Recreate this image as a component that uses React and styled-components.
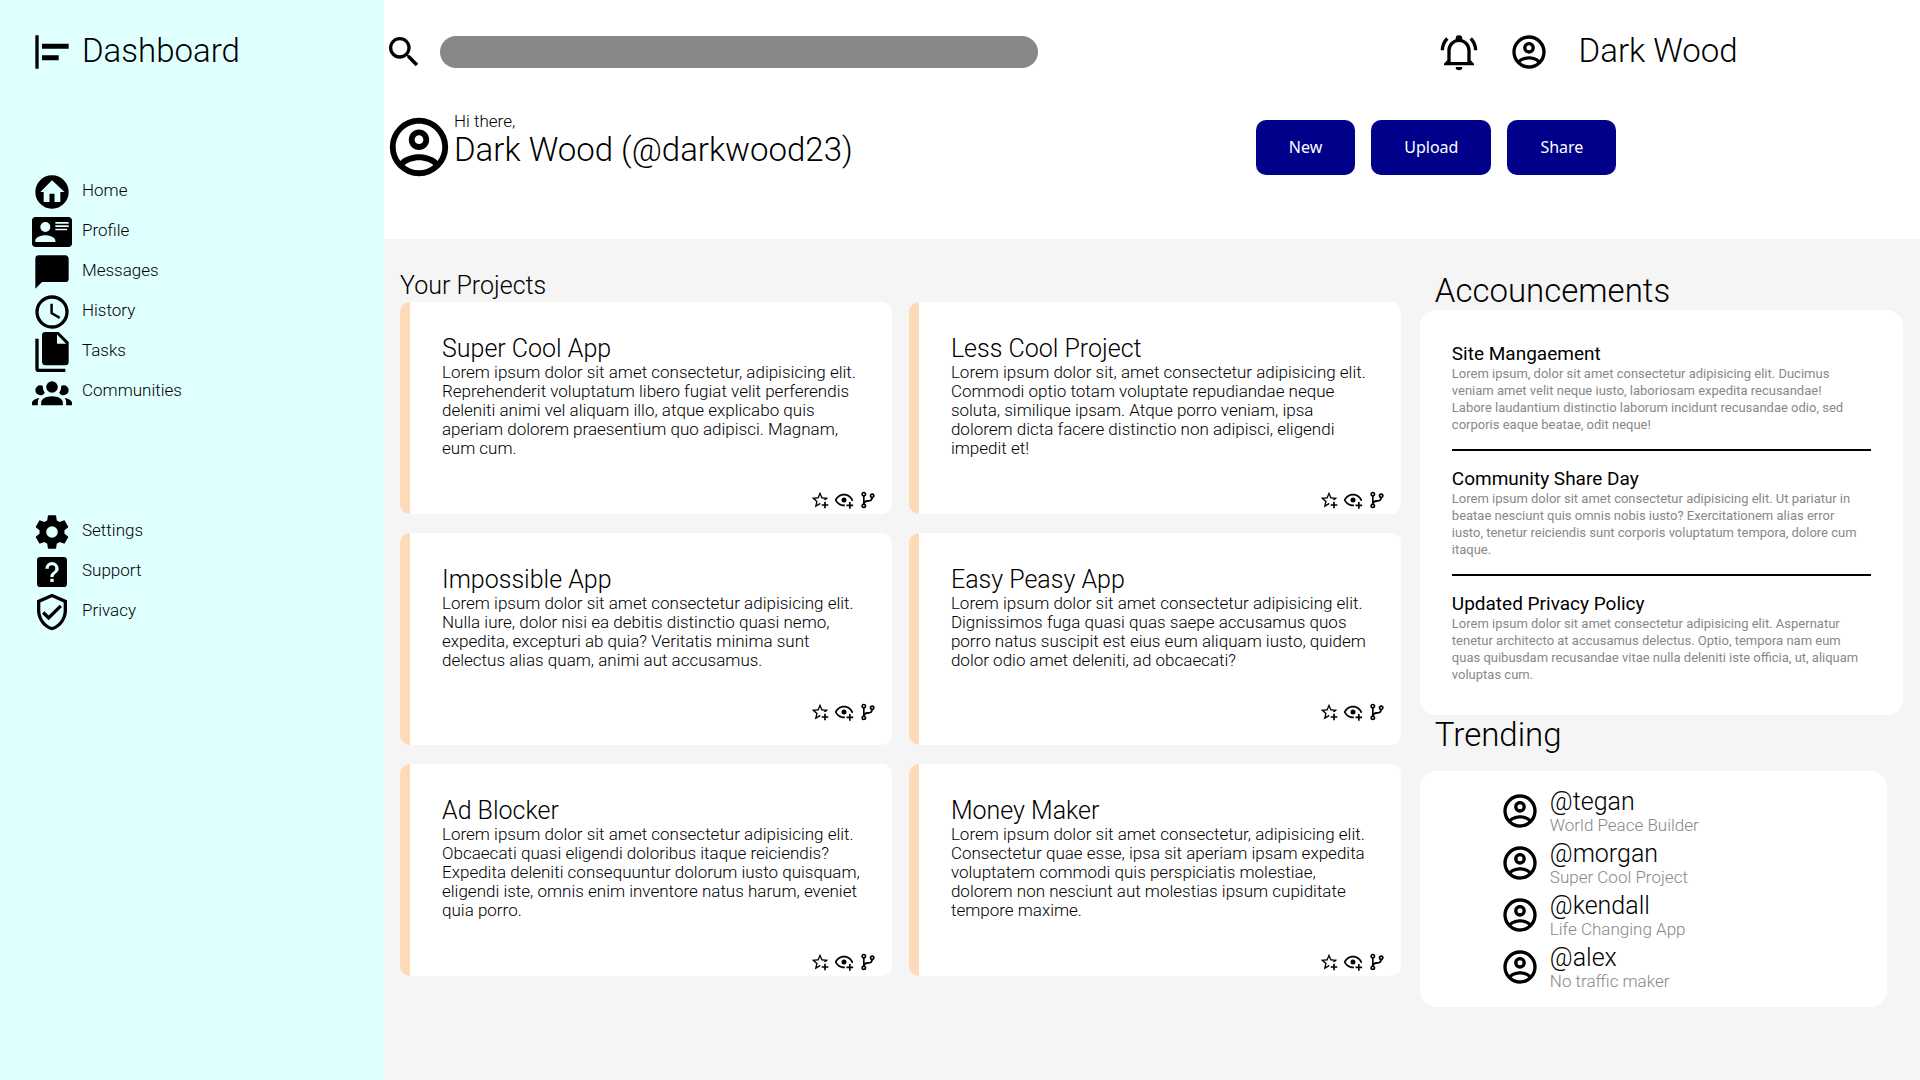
import React from "react";
import styled, { createGlobalStyle } from "styled-components";

const GlobalStyle = createGlobalStyle`
  *, *::before, *::after { box-sizing: border-box; margin: 0; padding: 0; }
  body {
    font-family: Roboto, "Liberation Sans", sans-serif;
    font-size: 17px;
    font-weight: 300;
    line-height: 19px;
    color: #000;
    background: #f5f5f5;
  }
  ul { list-style: none; }
  a { color: inherit; text-decoration: none; }
`;

const icons = {
  dashboard: "M4 22H2V2H4V22M22 7H6V10H22V7M16 14H6V17H16V14Z",
  home: "M19.07 4.93C17.22 3 14.66 1.96 12 2C9.34 1.96 6.79 3 4.94 4.93C3 6.78 1.96 9.34 2 12C1.96 14.66 3 17.21 4.93 19.06C6.78 21 9.34 22.04 12 22C14.66 22.04 17.21 21 19.06 19.07C21 17.22 22.04 14.66 22 12C22.04 9.34 21 6.78 19.07 4.93M17 12V18H13.5V13H10.5V18H7V12H5L12 5L19.5 12H17Z",
  profile: "M2,3H22C23.05,3 24,3.95 24,5V19C24,20.05 23.05,21 22,21H2C0.95,21 0,20.05 0,19V5C0,3.95 0.95,3 2,3M14,6V7H22V6H14M14,8V9H21.5L22,9V8H14M14,10V11H21V10H14M8,13.91C6,13.91 2,15 2,17V18H14V17C14,15 10,13.91 8,13.91M8,6A3,3 0 0,0 5,9A3,3 0 0,0 8,12A3,3 0 0,0 11,9A3,3 0 0,0 8,6Z",
  message: "M20,2H4A2,2 0 0,0 2,4V22L6,18H20A2,2 0 0,0 22,16V4C22,2.89 21.1,2 20,2Z",
  clock: "M12,20A8,8 0 0,0 20,12A8,8 0 0,0 12,4A8,8 0 0,0 4,12A8,8 0 0,0 12,20M12,2A10,10 0 0,1 22,12A10,10 0 0,1 12,22C6.47,22 2,17.5 2,12A10,10 0 0,1 12,2M12.5,7V12.25L17,14.92L16.25,16.15L11,13V7H12.5Z",
  tasks: "M15,7H20.5L15,1.5V7M8,0H16L22,6V18A2,2 0 0,1 20,20H8C6.89,20 6,19.1 6,18V2A2,2 0 0,1 8,0M4,4V22H20V24H4A2,2 0 0,1 2,22V4H4Z",
  group: "M12,5.5A3.5,3.5 0 0,1 15.5,9A3.5,3.5 0 0,1 12,12.5A3.5,3.5 0 0,1 8.5,9A3.5,3.5 0 0,1 12,5.5M5,8C5.56,8 6.08,8.15 6.53,8.42C6.38,9.85 6.8,11.27 7.66,12.38C7.16,13.34 6.16,14 5,14A3,3 0 0,1 2,11A3,3 0 0,1 5,8M19,8A3,3 0 0,1 22,11A3,3 0 0,1 19,14C17.84,14 16.84,13.34 16.34,12.38C17.2,11.27 17.62,9.85 17.47,8.42C17.92,8.15 18.44,8 19,8M5.5,18.25C5.5,16.18 8.41,14.5 12,14.5C15.59,14.5 18.5,16.18 18.5,18.25V20H5.5V18.25M0,20V18.5C0,17.11 1.89,15.94 4.45,15.6C3.86,16.28 3.5,17.22 3.5,18.25V20H0M24,20H20.5V18.25C20.5,17.22 20.14,16.28 19.55,15.6C22.11,15.94 24,17.11 24,18.5V20Z",
  cog: "M12,15.5A3.5,3.5 0 0,1 8.5,12A3.5,3.5 0 0,1 12,8.5A3.5,3.5 0 0,1 15.5,12A3.5,3.5 0 0,1 12,15.5M19.43,12.97C19.47,12.65 19.5,12.33 19.5,12C19.5,11.67 19.47,11.34 19.43,11L21.54,9.37C21.73,9.22 21.78,8.95 21.66,8.73L19.66,5.27C19.54,5.05 19.27,4.96 19.05,5.05L16.56,6.05C16.04,5.66 15.5,5.32 14.87,5.07L14.5,2.42C14.46,2.18 14.25,2 14,2H10C9.75,2 9.54,2.18 9.5,2.42L9.13,5.07C8.5,5.32 7.96,5.66 7.44,6.05L4.95,5.05C4.73,4.96 4.46,5.05 4.34,5.27L2.34,8.73C2.21,8.95 2.27,9.22 2.46,9.37L4.57,11C4.53,11.34 4.5,11.67 4.5,12C4.5,12.33 4.53,12.65 4.57,12.97L2.46,14.63C2.27,14.78 2.21,15.05 2.34,15.27L4.34,18.73C4.46,18.95 4.73,19.03 4.95,18.95L7.44,17.94C7.96,18.34 8.5,18.68 9.13,18.93L9.5,21.58C9.54,21.82 9.75,22 10,22H14C14.25,22 14.46,21.82 14.5,21.58L14.87,18.93C15.5,18.67 16.04,18.34 16.56,17.94L19.05,18.95C19.27,19.03 19.54,18.95 19.66,18.73L21.66,15.27C21.78,15.05 21.73,14.78 21.54,14.63L19.43,12.97Z",
  help: "M11,18H13V16H11V18M12,6A4,4 0 0,0 8,10H10A2,2 0 0,1 12,8A2,2 0 0,1 14,10C14,12 11,11.75 11,15H13C13,12.75 16,12.5 16,10A4,4 0 0,0 12,6M5,3H19A2,2 0 0,1 21,5V19A2,2 0 0,1 19,21H5A2,2 0 0,1 3,19V5A2,2 0 0,1 5,3Z",
  shield: "M21,11C21,16.55 17.16,21.74 12,23C6.84,21.74 3,16.55 3,11V5L12,1L21,5V11M12,21C15.75,20 19,15.54 19,11.22V6.3L12,3.18L5,6.3V11.22C5,15.54 8.25,20 12,21M10,17L6,13L7.41,11.59L10,14.17L16.59,7.58L18,9",
  search: "M9.5,3A6.5,6.5 0 0,1 16,9.5C16,11.11 15.41,12.59 14.44,13.73L14.71,14H15.5L20.5,19L19,20.5L14,15.5V14.71L13.73,14.44C12.59,15.41 11.11,16 9.5,16A6.5,6.5 0 0,1 3,9.5A6.5,6.5 0 0,1 9.5,3M9.5,5C7,5 5,7 5,9.5C5,12 7,14 9.5,14C12,14 14,12 14,9.5C14,7 12,5 9.5,5Z",
  bell: "M10,21H14A2,2 0 0,1 12,23A2,2 0 0,1 10,21M21,19V20H3V19L5,17V11C5,7.9 7.03,5.17 10,4.29C10,4.19 10,4.1 10,4A2,2 0 0,1 12,2A2,2 0 0,1 14,4C14,4.1 14,4.19 14,4.29C16.97,5.17 19,7.9 19,11V17L21,19M17,11A5,5 0 0,0 12,6A5,5 0 0,0 7,11V18H17V11M19.75,3.19L18.33,4.61C20.04,6.3 21,8.6 21,11H23C23,8.07 21.84,5.25 19.75,3.19M1,11H3C3,8.6 3.96,6.3 5.67,4.61L4.25,3.19C2.16,5.25 1,8.07 1,11Z",
  account: "M12,2A10,10 0 0,0 2,12A10,10 0 0,0 12,22A10,10 0 0,0 22,12A10,10 0 0,0 12,2M7.07,18.28C7.5,17.38 10.12,16.5 12,16.5C13.88,16.5 16.5,17.38 16.93,18.28C15.57,19.36 13.86,20 12,20C10.14,20 8.43,19.36 7.07,18.28M18.36,16.83C16.93,15.09 13.46,14.5 12,14.5C10.54,14.5 7.07,15.09 5.64,16.83C4.62,15.5 4,13.82 4,12C4,7.59 7.59,4 12,4C16.41,4 20,7.59 20,12C20,13.82 19.38,15.5 18.36,16.83M12,6C10.06,6 8.5,7.56 8.5,9.5C8.5,11.44 10.06,13 12,13C13.94,13 15.5,11.44 15.5,9.5C15.5,7.56 13.94,6 12,6M12,11A1.5,1.5 0 0,1 10.5,9.5A1.5,1.5 0 0,1 12,8A1.5,1.5 0 0,1 13.5,9.5A1.5,1.5 0 0,1 12,11Z",
  star: "M5.8 21L7.4 14L2 9.2L9.2 8.6L12 2L14.8 8.6L22 9.2L18.8 12H18C17.3 12 16.6 12.1 15.9 12.4L18.1 10.5L13.7 10.1L12 6.1L10.3 10.1L5.9 10.5L9.2 13.4L8.2 17.7L12 15.4L12.5 15.7C12.3 16.2 12.1 16.8 12.1 17.3L5.8 21M17 14V17H14V19H17V22H19V19H22V17H19V14H17Z",
  eye: "M12,4.5C7,4.5 2.73,7.61 1,12C2.73,16.39 7,19.5 12,19.5C12.36,19.5 12.72,19.5 13.08,19.45C13.03,19.13 13,18.82 13,18.5C13,18.14 13.03,17.78 13.1,17.42C12.74,17.46 12.37,17.5 12,17.5C8.24,17.5 4.83,15.36 3.18,12C4.83,8.64 8.24,6.5 12,6.5C15.76,6.5 19.17,8.64 20.82,12C20.7,12.24 20.56,12.45 20.43,12.68C21.09,12.84 21.72,13.11 22.29,13.5C22.56,13 22.8,12.5 23,12C21.27,7.61 17,4.5 12,4.5M12,9A3,3 0 0,0 9,12A3,3 0 0,0 12,15A3,3 0 0,0 15,12A3,3 0 0,0 12,9M18,14.5V17.5H15V19.5H18V22.5H20V19.5H23V17.5H20V14.5H18Z",
  branch: "M13,14C9.64,14 8.54,15.35 8.18,16.24C9.25,16.7 10,17.76 10,19A3,3 0 0,1 7,22A3,3 0 0,1 4,19C4,17.69 4.83,16.58 6,16.17V7.83C4.83,7.42 4,6.31 4,5A3,3 0 0,1 7,2A3,3 0 0,1 10,5C10,6.31 9.17,7.42 8,7.83V13.12C8.88,12.47 10.16,12 12,12C14.67,12 15.56,10.66 15.85,9.77C14.77,9.32 14,8.25 14,7A3,3 0 0,1 17,4A3,3 0 0,1 20,7C20,8.34 19.12,9.5 17.91,9.86C17.65,11.29 16.68,14 13,14M7,18A1,1 0 0,0 6,19A1,1 0 0,0 7,20A1,1 0 0,0 8,19A1,1 0 0,0 7,18M7,4A1,1 0 0,0 6,5A1,1 0 0,0 7,6A1,1 0 0,0 8,5A1,1 0 0,0 7,4M17,6A1,1 0 0,0 16,7A1,1 0 0,0 17,8A1,1 0 0,0 18,7A1,1 0 0,0 17,6Z",
};

const Svg = styled.svg`
  display: block;
  flex: none;
  width: ${(p) => p.$size}px;
  height: ${(p) => p.$size}px;
  fill: currentColor;
`;

function Icon({ name, size = 40 }) {
  return (
    <Svg viewBox="0 0 24 24" $size={size} aria-hidden="true">
      <path d={icons[name]} />
    </Svg>
  );
}

const Page = styled.div`
  display: grid;
  grid-template-columns: 20% minmax(0, 1fr);
  min-height: 100vh;
`;

const Sidebar = styled.aside`
  display: flex;
  flex-direction: column;
  gap: 100px;
  padding: 32px;
  background: #e0ffff;
`;

const Brand = styled.div`
  display: flex;
  align-items: flex-start;
  gap: 10px;
  height: 40px;
`;

const BrandName = styled.h1`
  font-size: 33px;
  font-weight: 300;
  line-height: 37px;
`;

const NavLink = styled.a`
  display: flex;
  align-items: flex-start;
  gap: 10px;
  height: 40px;
  line-height: 37px;
`;

const Main = styled.div`
  display: flex;
  flex-direction: column;
`;

const Header = styled.header`
  display: flex;
  flex-direction: column;
  gap: 40px;
  padding: 32px 0 57px;
  background: #fff;
`;

const TopBar = styled.div`
  display: grid;
  grid-template-columns: 46fr 21fr;
`;

const Search = styled.label`
  display: flex;
  align-items: center;
  gap: 16px;
`;

const SearchInput = styled.input`
  width: 100%;
  max-width: 598px;
  height: 32px;
  padding: 0 16px;
  border: 0;
  border-radius: 16px;
  background: #888;
  font: inherit;
`;

const Account = styled.div`
  display: flex;
  align-items: flex-start;
  gap: 30px;
`;

const IconButton = styled.button`
  display: block;
  border: 0;
  background: none;
  color: inherit;
  cursor: pointer;
`;

const LargeText = styled.p`
  font-size: 33px;
  line-height: 37px;
  white-space: nowrap;
`;

const Welcome = styled.div`
  display: grid;
  grid-template-columns: 21fr 16fr;
`;

const Greeting = styled.div`
  display: flex;
`;

const Actions = styled.div`
  display: flex;
  align-items: center;
  gap: 16px;
`;

const ActionButton = styled.button`
  padding: 16px 33px;
  border: 0;
  border-radius: 10px;
  background: #00008b;
  color: #fff;
  font: 400 16px/23px "Noto Sans", sans-serif;
  cursor: pointer;
`;

const Content = styled.main`
  display: grid;
  grid-template-columns: minmax(0, 29fr) minmax(0, 14fr);
  align-items: start;
  gap: 19px;
  padding: 32px 17px 32px 16px;
`;

const Title = styled.h2`
  font-size: 25px;
  font-weight: 300;
  line-height: 29px;
`;

const ProjectsTitle = styled(Title)`
  margin-bottom: 2px;
`;

const ProjectGrid = styled.div`
  display: grid;
  grid-template-columns: repeat(2, minmax(0, 1fr));
  grid-auto-rows: 1fr;
  gap: 19px 17px;
`;

const Card = styled.article`
  border-left: 10px solid #ffdab9;
  border-radius: 10px;
  background: #fff;
`;

const CardBody = styled.div`
  padding: 32px 24px 32px 32px;
`;

const CardActions = styled.div`
  display: flex;
  justify-content: flex-end;
  gap: 4px;
  padding: 0 14px 4px;
`;

const SectionTitle = styled.h2`
  padding-left: 15px;
  margin-bottom: ${(p) => p.$gap}px;
  font-size: 33px;
  font-weight: 300;
  line-height: 39px;
`;

const Announcements = styled.div`
  padding: 32px;
  border-radius: 16px;
  background: #fff;
`;

const Notice = styled.article`
  & + & {
    margin-top: 16px;
    padding-top: 16px;
    border-top: 2px solid #000;
  }
`;

const NoticeTitle = styled.h3`
  font-size: 19px;
  font-weight: 400;
  line-height: 23px;
`;

const NoticeText = styled.p`
  padding-right: 8px;
  font-size: 13px;
  font-weight: 400;
  line-height: 17px;
  color: #888;
`;

const Trending = styled.ul`
  display: flex;
  flex-direction: column;
  gap: 4px;
  margin-right: 16px;
  padding: 16px 16px 16px 80px;
  border-radius: 16px;
  background: #fff;
`;

const Person = styled.li`
  display: flex;
  align-items: center;
  gap: 10px;
`;

const Handle = styled.p`
  font-size: 25px;
  line-height: 29px;
`;

const Role = styled.p`
  color: #888;
`;

const mainNav = [
  ["home", "Home"],
  ["profile", "Profile"],
  ["message", "Messages"],
  ["clock", "History"],
  ["tasks", "Tasks"],
  ["group", "Communities"],
];

const utilityNav = [
  ["cog", "Settings"],
  ["help", "Support"],
  ["shield", "Privacy"],
];

const projects = [
  ["Super Cool App", "Lorem ipsum dolor sit amet consectetur, adipisicing elit. Reprehenderit voluptatum libero fugiat velit perferendis deleniti animi vel aliquam illo, atque explicabo quis aperiam dolorem praesentium quo adipisci. Magnam, eum cum."],
  ["Less Cool Project", "Lorem ipsum dolor sit, amet consectetur adipisicing elit. Commodi optio totam voluptate repudiandae neque soluta, similique ipsam. Atque porro veniam, ipsa dolorem dicta facere distinctio non adipisci, eligendi impedit et!"],
  ["Impossible App", "Lorem ipsum dolor sit amet consectetur adipisicing elit. Nulla iure, dolor nisi ea debitis distinctio quasi nemo, expedita, excepturi ab quia? Veritatis minima sunt delectus alias quam, animi aut accusamus."],
  ["Easy Peasy App", "Lorem ipsum dolor sit amet consectetur adipisicing elit. Dignissimos fuga quasi quas saepe accusamus quos porro natus suscipit est eius eum aliquam iusto, quidem dolor odio amet deleniti, ad obcaecati?"],
  ["Ad Blocker", "Lorem ipsum dolor sit amet consectetur adipisicing elit. Obcaecati quasi eligendi doloribus itaque reiciendis? Expedita deleniti consequuntur dolorum iusto quisquam, eligendi iste, omnis enim inventore natus harum, eveniet quia porro."],
  ["Money Maker", "Lorem ipsum dolor sit amet consectetur, adipisicing elit. Consectetur quae esse, ipsa sit aperiam ipsam expedita voluptatem commodi quis perspiciatis molestiae, dolorem non nesciunt aut molestias ipsum cupiditate tempore maxime."],
];

const notices = [
  ["Site Mangaement", "Lorem ipsum, dolor sit amet consectetur adipisicing elit. Ducimus veniam amet velit neque iusto, laboriosam expedita recusandae! Labore laudantium distinctio laborum incidunt recusandae odio, sed corporis eaque beatae, odit neque!"],
  ["Community Share Day", "Lorem ipsum dolor sit amet consectetur adipisicing elit. Ut pariatur in beatae nesciunt quis omnis nobis iusto? Exercitationem alias error iusto, tenetur reiciendis sunt corporis voluptatum tempora, dolore cum itaque."],
  ["Updated Privacy Policy", "Lorem ipsum dolor sit amet consectetur adipisicing elit. Aspernatur tenetur architecto at accusamus delectus. Optio, tempora nam eum quas quibusdam recusandae vitae nulla deleniti iste officia, ut, aliquam voluptas cum."],
];

const people = [
  ["@tegan", "World Peace Builder"],
  ["@morgan", "Super Cool Project"],
  ["@kendall", "Life Changing App"],
  ["@alex", "No traffic maker"],
];

function Nav({ items, label }) {
  return (
    <nav aria-label={label}>
      <ul>
        {items.map(([icon, text]) => (
          <li key={text}>
            <NavLink href="#">
              <Icon name={icon} />
              {text}
            </NavLink>
          </li>
        ))}
      </ul>
    </nav>
  );
}

export default function App() {
  return (
    <Page>
      <GlobalStyle />
      <Sidebar>
        <Brand>
          <Icon name="dashboard" />
          <BrandName>Dashboard</BrandName>
        </Brand>
        <Nav items={mainNav} label="Main" />
        <Nav items={utilityNav} label="Utility" />
      </Sidebar>
      <Main>
        <Header>
          <TopBar>
            <Search>
              <Icon name="search" />
              <SearchInput type="search" aria-label="Search" />
            </Search>
            <Account>
              <IconButton type="button" aria-label="Notifications">
                <Icon name="bell" />
              </IconButton>
              <IconButton type="button" aria-label="Account">
                <Icon name="account" />
              </IconButton>
              <LargeText>Dark Wood</LargeText>
            </Account>
          </TopBar>
          <Welcome>
            <Greeting>
              <Icon name="account" size={70} />
              <div>
                <p>Hi there,</p>
                <LargeText>Dark Wood (@darkwood23)</LargeText>
              </div>
            </Greeting>
            <Actions>
              <ActionButton type="button">New</ActionButton>
              <ActionButton type="button">Upload</ActionButton>
              <ActionButton type="button">Share</ActionButton>
            </Actions>
          </Welcome>
        </Header>
        <Content>
          <section>
            <ProjectsTitle>Your Projects</ProjectsTitle>
            <ProjectGrid>
              {projects.map(([title, text]) => (
                <Card key={title}>
                  <CardBody>
                    <Title as="h3">{title}</Title>
                    <p>{text}</p>
                  </CardBody>
                  <CardActions>
                    <IconButton type="button" aria-label="Star">
                      <Icon name="star" size={20} />
                    </IconButton>
                    <IconButton type="button" aria-label="Watch">
                      <Icon name="eye" size={20} />
                    </IconButton>
                    <IconButton type="button" aria-label="Fork">
                      <Icon name="branch" size={20} />
                    </IconButton>
                  </CardActions>
                </Card>
              ))}
            </ProjectGrid>
          </section>
          <div>
            <section>
              <SectionTitle $gap={0}>Accouncements</SectionTitle>
              <Announcements>
                {notices.map(([title, text]) => (
                  <Notice key={title}>
                    <NoticeTitle>{title}</NoticeTitle>
                    <NoticeText>{text}</NoticeText>
                  </Notice>
                ))}
              </Announcements>
            </section>
            <section>
              <SectionTitle $gap={17}>Trending</SectionTitle>
              <Trending>
                {people.map(([handle, role]) => (
                  <Person key={handle}>
                    <Icon name="account" />
                    <div>
                      <Handle>{handle}</Handle>
                      <Role>{role}</Role>
                    </div>
                  </Person>
                ))}
              </Trending>
            </section>
          </div>
        </Content>
      </Main>
    </Page>
  );
}
